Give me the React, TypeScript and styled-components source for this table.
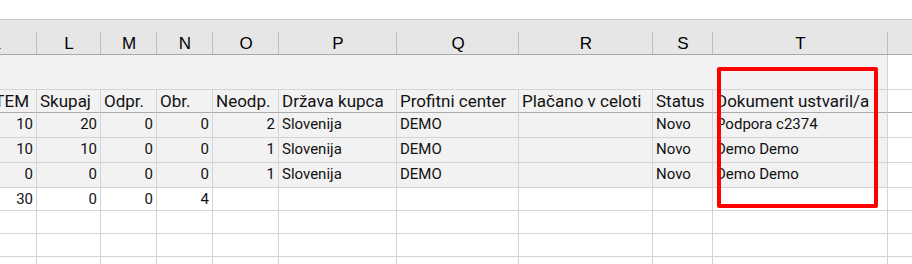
import React from 'react';
import styled, { createGlobalStyle } from 'styled-components';

const GlobalStyle = createGlobalStyle`
  html, body {
    margin: 0;
    padding: 0;
    background: #fff;
  }
  body {
    font-family: Roboto, 'Liberation Sans', Arial, sans-serif;
    color: #111;
  }
`;

// K is scrolled partly out of view, U is the last column on the right edge
const COLUMNS = '83px 64px 56px 56px 66px 118px 122px 134px 60px 175px 120px';
const LETTERS = ['K', 'L', 'M', 'N', 'O', 'P', 'Q', 'R', 'S', 'T', 'U'];

type Align = 'left' | 'right';

interface Row {
  cells: string[];
  shaded: boolean;
}

const ALIGN: Align[] = ['right', 'right', 'right', 'right', 'right', 'left', 'left', 'left', 'left', 'left', 'left'];

const HEADERS = [
  'Kol. ITEM',
  'Skupaj',
  'Odpr.',
  'Obr.',
  'Neodp.',
  'Država kupca',
  'Profitni center',
  'Plačano v celoti',
  'Status',
  'Dokument ustvaril/a',
  '',
];

const ROWS: Row[] = [
  { cells: ['10', '20', '0', '0', '2', 'Slovenija', 'DEMO', '', 'Novo', 'Podpora c2374', ''], shaded: true },
  { cells: ['10', '10', '0', '0', '1', 'Slovenija', 'DEMO', '', 'Novo', 'Demo Demo', ''], shaded: true },
  { cells: ['0', '0', '0', '0', '1', 'Slovenija', 'DEMO', '', 'Novo', 'Demo Demo', ''], shaded: true },
  { cells: ['30', '0', '0', '4', '', '', '', '', '', '', ''], shaded: false },
];

const EMPTY_ROWS = 3;

const Viewport = styled.div`
  width: 912px;
  height: 264px;
  overflow: hidden;
  background: #fff;
`;

const TopBar = styled.div`
  height: 19px;
  border-bottom: 1px solid #c9c9c9;
  background: #fff;
`;

const ColumnBar = styled.div`
  display: grid;
  grid-template-columns: ${COLUMNS};
  margin-left: -46px;
  height: 34px;
  background: #e6e6e6;
  border-bottom: 1px solid #a9a9a9;
`;

const Letter = styled.div`
  display: flex;
  align-items: flex-end;
  justify-content: center;
  font-family: 'Liberation Sans', Arial, sans-serif;
  font-size: 17px;
  line-height: 20px;
  color: #000;
  background: linear-gradient(#bdbdbd, #bdbdbd) right bottom / 1px 22px no-repeat;
`;

const Sheet = styled.div`
  position: relative;
  display: grid;
  grid-template-columns: ${COLUMNS};
  margin-left: -46px;
`;

const Band = styled.div`
  grid-column: 1 / 11;
  height: 34px;
  background: #f2f2f2;
  border-right: 1px solid #d4d4d4;
  border-bottom: 1px solid #d4d4d4;
`;

const Cell = styled.div<{ $align: Align; $shaded: boolean; $height: number; $head?: boolean }>`
  box-sizing: border-box;
  height: ${(p) => p.$height}px;
  padding: ${(p) => (p.$head ? '0 3px' : '1px 3px 0')};
  font-size: ${(p) => (p.$head ? 17 : 15)}px;
  line-height: ${(p) => (p.$head ? 22 : 20)}px;
  text-align: ${(p) => p.$align};
  white-space: nowrap;
  overflow: hidden;
  color: #111;
  background: ${(p) => (p.$shaded ? '#f2f2f2' : '#fff')};
  border-right: 1px solid #d4d4d4;
  border-bottom: 1px solid ${(p) => (p.$head ? '#ababab' : '#d4d4d4')};
`;

const Callout = styled.div`
  position: absolute;
  left: ${46 + 717}px;
  top: 12px;
  width: 161px;
  height: 141px;
  box-sizing: border-box;
  border: 4px solid #ff0000;
  border-radius: 2px;
  pointer-events: none;
`;

const App: React.FC = () => {
  const last = LETTERS.length - 1;

  return (
    <Viewport>
      <GlobalStyle />
      <TopBar />
      <ColumnBar>
        {LETTERS.map((l) => (
          <Letter key={l}>{l === 'U' ? '' : l}</Letter>
        ))}
      </ColumnBar>

      <Sheet>
        <Band />
        <Cell $align="left" $shaded={false} $height={35} />

        {HEADERS.map((h, i) => (
          <Cell key={`h${i}`} $head $align="left" $shaded={i !== last} $height={23}>
            {h}
          </Cell>
        ))}

        {ROWS.map((row, r) =>
          row.cells.map((value, i) => (
            <Cell
              key={`r${r}c${i}`}
              $align={ALIGN[i]}
              $shaded={row.shaded && i !== last}
              $height={row.shaded ? 25 : 23}
            >
              {value}
            </Cell>
          ))
        )}

        {Array.from({ length: EMPTY_ROWS }).map((_, r) =>
          LETTERS.map((l) => <Cell key={`e${r}${l}`} $align="left" $shaded={false} $height={23} />)
        )}

        <Callout />
      </Sheet>
    </Viewport>
  );
};

export default App;
